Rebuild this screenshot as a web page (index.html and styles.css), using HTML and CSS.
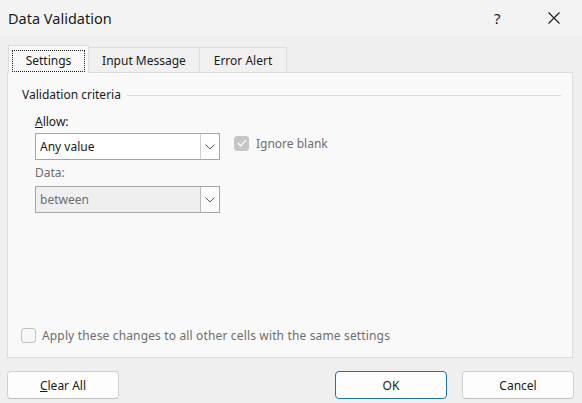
FILE: index.html
```html
<!DOCTYPE html>
<html>
<head>
<meta charset="utf-8">
<link rel="stylesheet" href="styles.css">
</head>
<body>
<div class="dialog">
  <div class="titlebar">
    <span class="title">Data Validation</span>
    <div class="tb-buttons">
      <span class="help">?</span>
      <svg class="close" width="12" height="12" viewBox="0 0 12 12"><path d="M0.5 0.5 L11.5 11.5 M11.5 0.5 L0.5 11.5" stroke="#1a1a1a" stroke-width="1.1" fill="none"/></svg>
    </div>
  </div>
  <div class="tabs">
    <div class="tab active"><span class="focus">Settings</span></div>
    <div class="tab">Input Message</div>
    <div class="tab">Error Alert</div>
  </div>
  <div class="panel">
    <div class="legend"><span>Validation criteria</span><div class="rule"></div></div>
    <div class="criteria">
      <div class="col">
        <div class="label"><u>A</u>llow:</div>
        <div class="select">
          <span class="value">Any value</span>
          <span class="arrow"><svg width="10" height="6" viewBox="0 0 10 6"><path d="M0.5 0.5 L5 5 L9.5 0.5" stroke="#555" stroke-width="1" fill="none"/></svg></span>
        </div>
        <div class="label disabled data-label">Data:</div>
        <div class="select disabled">
          <span class="value">between</span>
          <span class="arrow"><svg width="10" height="6" viewBox="0 0 10 6"><path d="M0.5 0.5 L5 5 L9.5 0.5" stroke="#555" stroke-width="1" fill="none"/></svg></span>
        </div>
      </div>
      <div class="ignore">
        <span class="check checked"><svg width="10" height="8" viewBox="0 0 10 8"><path d="M1 4 L3.8 6.8 L9 1.2" stroke="#fff" stroke-width="1.2" fill="none"/></svg></span>
        <span class="disabled-text">Ignore blank</span>
      </div>
    </div>
    <div class="apply">
      <span class="check"></span>
      <span class="disabled-text wide">Apply these changes to all other cells with the same settings</span>
    </div>
  </div>
  <div class="footer">
    <button class="btn"><u>C</u>lear All</button>
    <div class="spacer"></div>
    <button class="btn primary">OK</button>
    <button class="btn">Cancel</button>
  </div>
</div>
</body>
</html>
```

FILE: styles.css
```css
html, body {
  margin: 0;
  padding: 0;
}
body {
  width: 582px;
  height: 403px;
  background: #efefef;
  font-family: "Noto Sans", "Open Sans", sans-serif;
  font-size: 12px;
  color: #1a1a1a;
  overflow: hidden;
}
.dialog {
  display: flex;
  flex-direction: column;
  height: 403px;
}
.titlebar {
  height: 36px;
  background: #f3f3f3;
  display: flex;
  align-items: center;
  padding-left: 8px;
  box-sizing: border-box;
}
.title {
  font-size: 14.5px;
  flex: 1;
  margin-top: -1px;
}
.tb-buttons {
  display: flex;
  align-items: center;
}
.help {
  font-size: 15px;
  width: 12px;
  margin-right: 42px;
  margin-top: -1px;
}
.close {
  margin-right: 22px;
  margin-top: 0px;
}
.tabs {
  display: flex;
  align-items: flex-end;
  margin-top: 9px;
  padding-left: 8px;
  height: 27px;
}
.tab {
  height: 25px;
  box-sizing: border-box;
  border: 1px solid #dcdcdc;
  border-bottom: none;
  background: #f0f0f0;
  display: flex;
  align-items: center;
  justify-content: center;
  padding: 0 12px;
  margin-left: -1px;
}
.tab:nth-child(2) { width: 112px; }
.tab:nth-child(3) { width: 88px; }
.tab.active {
  height: 28px;
  width: 81px;
  background: #f9f9f9;
  margin-left: 0;
  margin-bottom: -1px;
  position: relative;
  z-index: 1;
  padding: 0 3px;
}
.focus {
  display: flex;
  align-items: center;
  justify-content: center;
  width: 73px;
  height: 22px;
  box-sizing: border-box;
  border: 1px dotted #222;
  margin-top: 2px;
}
.panel {
  margin: 0 9px 0 7px;
  height: 286px;
  box-sizing: border-box;
  border: 1px solid #dcdcdc;
  background: #f9f9f9;
  display: flex;
  flex-direction: column;
}
.legend {
  display: flex;
  align-items: center;
  margin-top: 13px;
  padding-left: 14px;
  padding-right: 11px;
}
.rule {
  flex: 1;
  height: 1px;
  background: #dcdcdc;
  margin-left: 6px;
  margin-top: 1px;
}
.criteria {
  display: flex;
  padding-left: 27px;
  margin-top: 12px;
}
.col {
  width: 185px;
  display: flex;
  flex-direction: column;
}
.label {
  height: 14px;
  line-height: 14px;
  margin-bottom: 4px;
}
.label.disabled {
  color: #6e6e6e;
}
.data-label {
  margin-top: 6px;
  margin-bottom: 6px;
}
.select {
  height: 27px;
  box-sizing: border-box;
  border: 1px solid #a6a6a6;
  background: #fff;
  display: flex;
  align-items: center;
}
.select .value {
  flex: 1;
  padding-left: 4px;
}
.select .arrow {
  width: 18px;
  height: 100%;
  border-left: 1px solid #cfcfcf;
  display: flex;
  align-items: center;
  justify-content: center;
  background: #fff;
}
.select.disabled {
  background: #efefef;
  color: #6e6e6e;
}
.select.disabled .arrow {
  background: #fbfbfb;
  border-left-color: #bcbcbc;
}
.ignore {
  display: flex;
  align-items: center;
  margin-left: 14px;
  margin-top: 20px;
  height: 16px;
}
.check {
  width: 15px;
  height: 15px;
  box-sizing: border-box;
  border: 1px solid #c2c2c2;
  border-radius: 3px;
  background: #f7f7f7;
  display: inline-flex;
  align-items: center;
  justify-content: center;
  margin-right: 7px;
  flex: none;
}
.check.checked {
  background: #c6c6c6;
  border-color: #c6c6c6;
}
.disabled-text {
  color: #6e6e6e;
}
.wide {
  letter-spacing: 0.15px;
}
.apply {
  margin-top: auto;
  margin-bottom: 13px;
  padding-left: 13px;
  display: flex;
  align-items: center;
}
.apply .check {
  margin-right: 6px;
}
.footer {
  display: flex;
  padding: 0 8px 0 7px;
  margin-top: 13px;
}
.spacer {
  flex: 1;
}
.btn {
  width: 112px;
  height: 28px;
  box-sizing: border-box;
  border: 1px solid #d0d0d0;
  border-bottom-color: #c0c0c0;
  border-radius: 4px;
  background: #fdfdfd;
  font-family: inherit;
  font-size: 12px;
  color: #1a1a1a;
  padding: 0;
}
.btn.primary {
  border: 1px solid #1d6fc0;
  margin-right: 15px;
}
```
